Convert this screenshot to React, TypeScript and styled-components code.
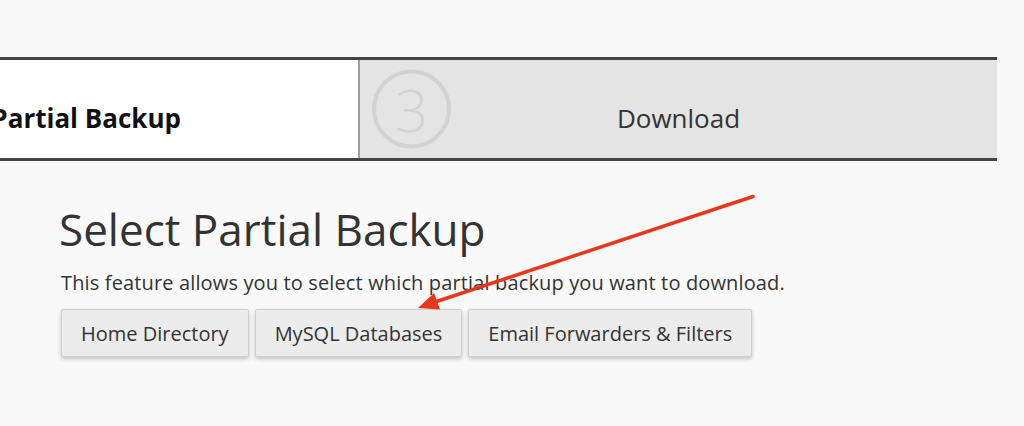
import React from 'react';
import styled, { createGlobalStyle } from 'styled-components';

const GlobalStyle = createGlobalStyle`
  html, body {
    margin: 0;
    padding: 0;
    background: #f9f9f9;
  }
  body {
    font-family: 'Open Sans', 'Noto Sans', sans-serif;
    color: #333;
  }
`;

const Page = styled.div`
  position: relative;
  width: 1024px;
  height: 426px;
  overflow: hidden;
  background: #f9f9f9;
`;

const Steps = styled.div`
  display: flex;
  margin: 57px 0 0 -280px;
  width: 1277px;
  height: 98px;
  border-top: 3px solid #444;
  border-bottom: 3px solid #444;
`;

const Step = styled.div<{ $active?: boolean }>`
  position: relative;
  flex: ${(p) => (p.$active ? '0 0 638px' : '1 1 0')};
  display: flex;
  align-items: center;
  justify-content: center;
  padding: 18px 0 0 ${(p) => (p.$active ? '10px' : '0')};
  box-sizing: border-box;
  background: ${(p) => (p.$active ? '#fff' : '#e4e4e4')};
  border-left: ${(p) => (p.$active ? 'none' : '2px solid #a0a0a0')};
  font-size: 26px;
  font-weight: ${(p) => (p.$active ? 700 : 400)};
  color: ${(p) => (p.$active ? '#111' : '#333')};
`;

const StepNumber = styled.div`
  position: absolute;
  left: 12px;
  top: 50%;
  transform: translateY(-50%);
  width: 71px;
  height: 71px;
  border: 4px solid #d2d2d2;
  border-radius: 50%;
  display: flex;
  align-items: center;
  justify-content: center;
  font-size: 58px;
  font-weight: 300;
  line-height: 1;
  color: #d2d2d2;
`;

const Content = styled.div`
  padding: 0 0 0 61px;
`;

const Title = styled.h1`
  margin: 39px 0 0 -2px;
  font-size: 44px;
  font-weight: 400;
  line-height: 58px;
  color: #333;
`;

const Lead = styled.p`
  margin: 11px 0 0 0;
  font-size: 20px;
  line-height: 28px;
  letter-spacing: 0.14px;
  color: #333;
`;

const ButtonRow = styled.div`
  display: flex;
  gap: 6px;
  margin-top: 12px;
`;

const Button = styled.button`
  height: 48px;
  padding: 0 19px;
  background: #ececec;
  border: 1px solid #cfcfcf;
  border-radius: 2px;
  box-shadow: 0 2px 4px rgba(0, 0, 0, 0.22);
  font-family: 'Open Sans', 'Noto Sans', sans-serif;
  font-size: 20px;
  color: #333;
  cursor: pointer;
`;

const ArrowLayer = styled.svg`
  position: absolute;
  left: 0;
  top: 0;
  width: 1024px;
  height: 426px;
  pointer-events: none;
`;

export default function App() {
  return (
    <Page>
      <GlobalStyle />
      <Steps>
        <Step $active>Select Partial Backup</Step>
        <Step>
          <StepNumber>3</StepNumber>
          Download
        </Step>
      </Steps>
      <Content>
        <Title>Select Partial Backup</Title>
        <Lead>This feature allows you to select which partial backup you want to download.</Lead>
        <ButtonRow>
          <Button>Home Directory</Button>
          <Button>MySQL Databases</Button>
          <Button>Email Forwarders &amp; Filters</Button>
        </ButtonRow>
      </Content>
      <ArrowLayer viewBox="0 0 1024 426">
        <line x1="753" y1="196.5" x2="435" y2="302" stroke="#e8381c" strokeWidth="3.5" strokeLinecap="round" />
        <polygon points="418,308 440,309.5 434,293" fill="#e8381c" />
      </ArrowLayer>
    </Page>
  );
}
